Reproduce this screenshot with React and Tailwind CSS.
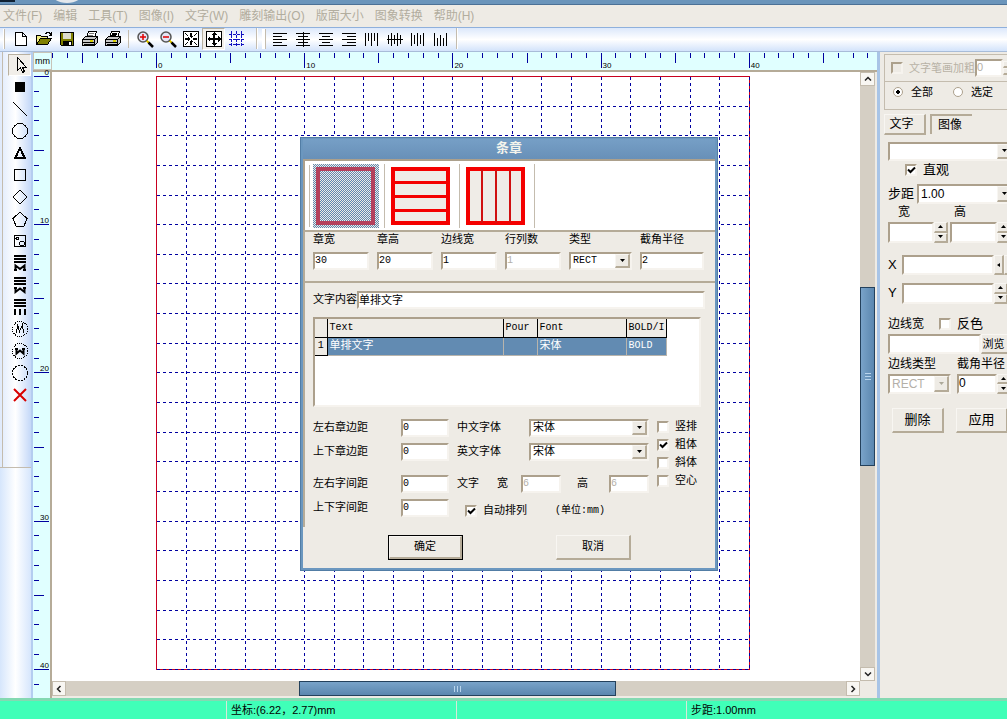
const sunken = "border-2 border-t-[#aca08c] border-l-[#aca08c] border-r-[#f6f3ee] border-b-[#f6f3ee]"
const raised = "border-t border-l border-r-2 border-b-2 border-t-[#f8f6f2] border-l-[#f8f6f2] border-r-[#b5ab98] border-b-[#b5ab98] bg-[#eeebe5]"
const sans = "font-['Liberation_Sans','Noto_Sans_CJK_SC',sans-serif]"
const mono = "font-['Liberation_Mono','Noto_Sans_CJK_SC',monospace]"

const STEP = 14.82

const menus = ["文件(F)", "编辑", "工具(T)", "图像(I)", "文字(W)", "雕刻输出(O)", "版面大小", "图象转换", "帮助(H)"]

function Icon({ children, size = 18 }) {
  return (
    <svg width={size} height={size} viewBox={`0 0 ${size} ${size}`} fill="none" stroke="#000" shapeRendering="crispEdges">
      {children}
    </svg>
  )
}

function Printer({ dark }) {
  return (
    <Icon>
      <path d="M5.5 7.5l2-6h8l-2 6" fill="#fff" />
      <path d="M8 3.5h5M7 5.5h5" stroke={dark ? "#000" : "#777"} strokeWidth={dark ? 2 : 1} />
      <path d="M1.5 9.5l3-3h11l1 1v5l-3 3h-12z" fill="#c8c8c8" />
      <path d="M1.5 9.5h12v6M13.5 9.5l3-3M2 12.5h11M3 14.5h11" />
      <path d="M9 11h3" stroke="#d8d000" strokeWidth="2" />
    </Icon>
  )
}

function Magnifier({ plus }) {
  return (
    <Icon>
      <circle cx="7" cy="7" r="5" fill="#e4e4f4" stroke="#555" strokeWidth="1.5" shapeRendering="auto" />
      <path d="M4 7h6" stroke="#e00000" strokeWidth="1.500" shapeRendering="auto" />
      {plus && <path d="M7 4v6" stroke="#e00000" strokeWidth="1.500" shapeRendering="auto" />}
      <path d="M11 11l2 2" stroke="#d8c000" strokeWidth="2" />
      <path d="M12.5 12.5l4.500 4.500" strokeWidth="2.500" shapeRendering="auto" />
    </Icon>
  )
}

const fileTools = [
  { name: "New", icon: <Icon><path d="M3.500 2.500h7l4 4v9h-11zM10.500 2.500v4h4" fill="#fff" /></Icon> },
  {
    name: "Open",
    icon: (
      <Icon>
        <path d="M1.500 14.500v-9h4l1 1h6v3" fill="#f0ec80" />
        <path d="M1.500 14.500l4-6h11l-4 6z" fill="#808000" />
        <path d="M10 3.500h1l1-1h2l2 2M16.500 2v3h-3" />
      </Icon>
    ),
  },
  {
    name: "Save",
    icon: (
      <Icon>
        <path d="M2.500 2.500h13v13h-12l-1-1z" fill="#808000" />
        <path d="M5 3h8v6h-8z" fill="#dcdccc" stroke="none" />
        <path d="M5 11h8v4h-8z" fill="#000" />
        <path d="M11.500 11.500v3" stroke="#fff" strokeWidth="2" />
      </Icon>
    ),
  },
  { name: "Print", icon: <Printer /> },
  { name: "Print setup", icon: <Printer dark /> },
]

const viewTools = [
  { name: "Zoom in", icon: <Magnifier plus /> },
  { name: "Zoom out", icon: <Magnifier /> },
  {
    name: "Fit page",
    icon: (
      <Icon>
        <path d="M1.500 1.500h15v15h-15z" fill="#fff" />
        <path d="M9 8l-2-2h4zM9 10l-2 2h4zM8 9l-2-2v4zM10 9l2-2v4z" fill="#000" stroke="none" />
        <path d="M9 3v3M9 12v3M3 9h3M12 9h3" strokeWidth="2" />
        <path d="M3 3l3 3M15 3l-3 3M3 15l3-3M15 15l-3-3" />
      </Icon>
    ),
  },
  {
    name: "Move",
    pressed: true,
    icon: (
      <Icon>
        <path d="M1.500 1.500h15v15h-15z" fill="#fff" />
        <path d="M9 3v12M3 9h12" strokeWidth="2" />
        <path d="M9 2l-3 3h6zM9 16l-3-3h6zM2 9l3-3v6zM16 9l-3-3v6z" fill="#000" stroke="none" />
      </Icon>
    ),
  },
  { name: "Grid", icon: <Icon><path d="M3.500 1v16M8.500 1v16M13.500 1v16M1 4.500h16M1 9.500h16M1 14.500h16" stroke="#1010c0" strokeDasharray="3 1" /></Icon> },
]

const alignTools = [
  { name: "Align left", d: "M2 3.500h14M2 6.500h9M2 9.500h14M2 12.500h9M2 15.500h14" },
  { name: "Align centre line", d: "M2 3.500h14M4 6.500h10M2 9.500h14M4 12.500h10M2 15.500h14M9 2v15" },
  { name: "Align centre", d: "M2 3.500h14M5 6.500h8M2 9.500h14M5 12.500h8M2 15.500h14" },
  { name: "Align right", d: "M2 3.500h14M7 6.500h9M2 9.500h14M7 12.500h9M2 15.500h14" },
  { name: "Align top", d: "M2.500 3v13M5.500 3v8M8.500 3v13M11.500 3v8M14.500 3v13" },
  { name: "Align middle line", d: "M2.500 5v9M5.500 3v13M8.500 5v9M11.500 3v13M14.500 5v9M1 9.500h16" },
  { name: "Align middle", d: "M2.500 3v13M5.500 5v9M8.500 3v13M11.500 5v9M14.500 3v13" },
  { name: "Align bottom", d: "M2.500 3v13M5.500 8v8M8.500 5v11M11.500 8v8M14.500 3v13" },
]

const drawTools = [
  { name: "Select", pressed: true, icon: <path d="M6.500 1.500v13l3-3 2 5 2-1-2-4h4z" fill="#f4f1ec" /> },
  { name: "Filled box", icon: <path d="M4 4h10v10h-10z" fill="#000" stroke="none" /> },
  { name: "Line", icon: <path d="M2 2l14 14" /> },
  { name: "Circle", icon: <circle cx="9" cy="9" r="7.500" /> },
  { name: "Triangle", icon: <path d="M9 4l-4.500 9.500h9z" strokeWidth="2" /> },
  { name: "Rectangle", icon: <path d="M3.500 3.500h11v11h-11z" /> },
  { name: "Diamond", icon: <path d="M9 2l7 7-7 7-7-7z" /> },
  { name: "Pentagon", icon: <path d="M9 2l7 6.500-3 7.500h-8l-3-7.500z" /> },
  {
    name: "Image",
    icon: (
      <>
        <path d="M3.500 3.500h11v11h-11z" />
        <circle cx="6.500" cy="6.500" r="1.500" />
        <circle cx="11" cy="11.500" r="2.500" />
      </>
    ),
  },
  { name: "Text block M", icon: <><path d="M3 2h12M3 5h12M3 8h12" strokeWidth="2" /><path d="M3 16h3M12 16h3" strokeWidth="2" /><path d="M4.500 16v-4.500l4.500 3.500 4.500-3.500v4.500" strokeWidth="2" shapeRendering="auto" /></> },
  { name: "Text block W", icon: <><path d="M3 2h12M3 5h12M3 8h12" strokeWidth="2" /><path d="M3 12h3M12 12h3" strokeWidth="2" /><path d="M4.500 11.500v4.500l4.500-3.500 4.500 3.500v-4.500" strokeWidth="2" shapeRendering="auto" /></> },
  { name: "Text columns", icon: <><path d="M3 2h12M3 5h12M3 8h12" strokeWidth="2" /><path d="M4 11v6M9 11v6M14 11v6" strokeWidth="2" /></> },
  { name: "Round M", icon: <><circle cx="9" cy="9" r="7.500" strokeDasharray="1 1" /><path d="M5.500 13.500l1-9 2 7 3-7 1 9" /></> },
  { name: "Round W", icon: <><circle cx="9" cy="9" r="7.500" strokeDasharray="1 1" /><path d="M4 7h3M11 7h3" strokeWidth="2" /><path d="M5.500 6.500v5l3.500-3 3.500 3v-5" strokeWidth="2" shapeRendering="auto" /></> },
  { name: "Round", icon: <circle cx="9" cy="9" r="7.500" strokeDasharray="2 1" /> },
  { name: "Delete", icon: <path d="M3 3l12 12M15 3l-12 12" stroke="#d80000" strokeWidth="2" shapeRendering="auto" /> },
]

function ToolButton({ name, pressed, children }) {
  return (
    <button
      aria-label={name}
      className={`flex h-[22px] w-[23px] shrink-0 items-center justify-center ${pressed ? "border border-t-[#b8b0a0] border-l-[#b8b0a0] border-r-white border-b-white bg-[#f1eee9]" : ""}`}
    >
      {children}
    </button>
  )
}

function Arrow({ dir = "down", dim }) {
  const shapes = { down: "M0 0h5l-2.500 3z", up: "M0 3h5l-2.500-3z", left: "M4 0v4l-3-2z" }
  return (
    <svg width="5" height="4" viewBox="0 0 5 4" fill={dim ? "#aca899" : "#000"}>
      <path d={shapes[dir]} />
    </svg>
  )
}

function Combo({ value, label, disabled, className = "", id }) {
  return (
    <div className={`flex items-stretch ${sunken} bg-white ${className}`}>
      <select
        id={id}
        aria-label={label}
        disabled={disabled}
        className="min-w-0 flex-1 appearance-none bg-white pl-0.5 leading-[14px] text-black disabled:text-[#b4b0a8] disabled:opacity-100"
      >
        <option>{value}</option>
      </select>
      <span className={`flex w-[15px] items-center justify-center ${raised}`}>
        <Arrow dim={disabled} />
      </span>
    </div>
  )
}

function Field({ className = "", ...props }) {
  return <input type="text" className={`min-w-0 ${sunken} bg-white pb-0.5 disabled:text-[#b4b0a8] ${className}`} {...props} />
}

function Check({ label, checked, disabled, className = "" }) {
  return (
    <label className={`flex items-center gap-1.5 whitespace-nowrap ${disabled ? "text-[#b8b2a6]" : ""} ${className}`}>
      <span className="grid size-3 shrink-0">
        <input
          type="checkbox"
          defaultChecked={checked}
          disabled={disabled}
          className={`peer size-3 appearance-none [grid-area:1/1] ${sunken} bg-white disabled:bg-[#eeebe5]`}
        />
        <svg className="pointer-events-none hidden [grid-area:1/1] peer-checked:block" width="12" height="12" viewBox="0 0 12 12" fill="none" stroke="#000" strokeWidth="2">
          <path d="M3 5.500l2.500 2.500 4.500-4.500" />
        </svg>
      </span>
      {label}
    </label>
  )
}

function Spinner() {
  return (
    <span className="flex w-[14px] shrink-0 flex-col">
      <button aria-label="Increase" className={`flex flex-1 items-center justify-center ${raised}`}><Arrow dir="up" /></button>
      <button aria-label="Decrease" className={`flex flex-1 items-center justify-center ${raised}`}><Arrow /></button>
    </span>
  )
}

function HorizontalRuler() {
  const ticks = Array.from({ length: 56 }, (_, i) => i - 7)
  return (
    <svg className="h-full min-w-0 flex-1" stroke="#0000a0" shapeRendering="crispEdges">
      {ticks.map((t) => {
        const x = Math.round(104 + t * STEP) + 0.5
        return <line key={t} x1={x} x2={x} y1="1" y2={t % 10 === 0 ? 16 : t % 5 === 0 ? 11 : 6} />
      })}
      {[0, 10, 20, 30, 40].map((t) => (
        <text key={t} x={106 + t * STEP} y="16" fontSize="8" fill="#000" stroke="none">{t}</text>
      ))}
    </svg>
  )
}

function VerticalRuler() {
  const ticks = Array.from({ length: 42 }, (_, i) => i)
  return (
    <svg className="w-[17px] shrink-0 overflow-visible bg-[#e0ffff]" stroke="#0000a0" shapeRendering="crispEdges">
      {ticks.map((t) => {
        const y = Math.round(4 + t * STEP) + 0.5
        return <line key={t} y1={y} y2={y} x1="1" x2={t % 10 === 0 ? 16 : t % 5 === 0 ? 11 : 6} />
      })}
      {[0, 10, 20, 30, 40].map((t) => (
        <text key={t} x="16" y={3 + t * STEP} fontSize="8" textAnchor="end" fill="#000" stroke="none">{t}</text>
      ))}
    </svg>
  )
}

function Drawing() {
  const size = STEP * 40
  const lines = Array.from({ length: 20 }, (_, i) => Math.round((i + 1) * STEP * 2))
  return (
    <svg className="min-h-0 min-w-0 flex-1 bg-white" fill="none" shapeRendering="crispEdges">
      <rect x="104.500" y="4.500" width={Math.round(size)} height={Math.round(size)} stroke="#c80020" />
      <g stroke="#0000a0" strokeDasharray="3 3">
        {lines.map((p) => (
          <g key={p}>
            <line x1={p + 104.5} x2={p + 104.5} y1="5" y2={size + 4} />
            <line x1="105" x2={size + 104} y1={p + 4.5} y2={p + 4.5} />
          </g>
        ))}
      </g>
    </svg>
  )
}

function Chevron({ d }) {
  return (
    <svg width="8" height="8" viewBox="0 0 8 8" fill="none" stroke="#222" strokeWidth="1.500">
      <path d={d} />
    </svg>
  )
}

function VScroll() {
  return (
    <div className="flex w-[15px] shrink-0 flex-col bg-[#d5cfc4]">
      <button aria-label="Scroll up" className="flex h-3.5 items-center justify-center border border-[#c4bcae] bg-[#f8f6f2]"><Chevron d="M1 5.500l3-3 3 3" /></button>
      <div className="grow-[202] basis-0" />
      <div className="flex grow-[177] basis-0 flex-col items-center justify-center gap-0.5 border border-[#24415c] bg-gradient-to-r from-[#79a3c9] to-[#5b87af]">
        <i className="h-px w-1.5 bg-[#b8d4ec]" />
        <i className="h-px w-1.5 bg-[#b8d4ec]" />
        <i className="h-px w-1.5 bg-[#b8d4ec]" />
      </div>
      <div className="grow-[202] basis-0" />
      <button aria-label="Scroll down" className="flex h-3.5 items-center justify-center border border-[#c4bcae] bg-[#f8f6f2]"><Chevron d="M1 2.500l3 3 3-3" /></button>
    </div>
  )
}

function HScroll() {
  return (
    <div className="mr-[15px] flex h-[15px] bg-[#d5cfc4]">
      <button aria-label="Scroll left" className="flex w-3.5 items-center justify-center border border-[#c4bcae] bg-[#f8f6f2]"><Chevron d="M5.500 1l-3 3 3 3" /></button>
      <div className="grow-[234] basis-0" />
      <div className="flex grow-[315] basis-0 items-center justify-center gap-0.5 border border-[#24415c] bg-gradient-to-b from-[#79a3c9] to-[#5b87af]">
        <i className="h-1.5 w-px bg-[#b8d4ec]" />
        <i className="h-1.5 w-px bg-[#b8d4ec]" />
        <i className="h-1.5 w-px bg-[#b8d4ec]" />
      </div>
      <div className="grow-[231] basis-0" />
      <button aria-label="Scroll right" className="flex w-3.5 items-center justify-center border border-[#c4bcae] bg-[#f8f6f2]"><Chevron d="M2.500 1l3 3-3 3" /></button>
    </div>
  )
}

function Stamp({ type }) {
  const bars = [18, 32, 46]
  return (
    <svg width="66" height="64" viewBox="0 0 66 64" fill="none" stroke="#f40000" shapeRendering="crispEdges">
      {type === "single" && (
        <>
          <defs>
            <pattern id="dither" width="2" height="2" patternUnits="userSpaceOnUse">
              <path d="M0 0h1v1h-1zM1 1h1v1h-1z" fill="#5f87b0" stroke="none" />
            </pattern>
          </defs>
          <rect width="66" height="64" fill="#efece7" stroke="none" />
          <rect width="66" height="64" fill="url(#dither)" stroke="none" />
        </>
      )}
      <rect x="5" y="5" width="55" height="54" fill={type === "single" ? "none" : "#efece7"} stroke={type === "single" ? "#b4405c" : "#f40000"} strokeWidth="4" />
      {type === "rows" && bars.map((b) => <path key={b} d={`M5 ${b + 0.5}h55`} strokeWidth="3" />)}
      {type === "columns" && bars.map((b) => <path key={b} d={`M${b + 1} 5v54`} strokeWidth="2" stroke="#d01010" />)}
    </svg>
  )
}

const sizeFields = [
  { id: "w", label: "章宽", value: "30" },
  { id: "h", label: "章高", value: "20" },
  { id: "edge", label: "边线宽", value: "1" },
  { id: "rows", label: "行列数", value: "1", disabled: true },
]

const margins = ["左右章边距", "上下章边距", "左右字间距", "上下字间距"]

function StampDialog() {
  return (
    <div role="dialog" aria-label="条章" className={`absolute top-[85px] left-[267px] w-[418px] border-[3px] border-t-2 border-[#6b97bf] bg-[#eeebe5] text-[11px] leading-3 outline outline-1 -outline-offset-1 outline-[#527da5] ${mono}`}>
      <h1 className="h-5 bg-gradient-to-b from-[#769fc6] to-[#6890b8] text-center text-[13px] leading-5 font-bold text-[#f4f4ec]">条章</h1>

      <div className="flex h-[71px] items-center border-t-2 border-l-2 border-[#aca08c] bg-white">
        <span className="ml-1 h-[62px] w-px bg-[#c4bcae]" />
        {["single", "rows", "columns"].map((type) => (
          <button key={type} aria-label={type} className="flex h-[64px] w-[75px] items-center border-r border-[#c4bcae] pl-[3px]">
            <Stamp type={type} />
          </button>
        ))}
      </div>

      <div className="grid h-[51px] grid-cols-[repeat(4,56px)_63px_64px] gap-x-2 border-t-2 border-l-2 border-[#b5ab98] pt-0.5 pl-2">
        {sizeFields.map((f) => (
          <div key={f.id} className="flex flex-col gap-1.5">
            <label htmlFor={f.id}>{f.label}</label>
            <Field id={f.id} defaultValue={f.value} disabled={f.disabled} className="h-[18px] text-[10px]" />
          </div>
        ))}
        <div className="flex flex-col gap-1.5">
          <label htmlFor="type">类型</label>
          <Combo id="type" value="RECT" className="h-[18px] text-[10px]" />
        </div>
        <div className="flex flex-col gap-1.5">
          <label htmlFor="radius">截角半径</label>
          <Field id="radius" defaultValue="2" className="h-[18px] text-[10px]" />
        </div>
      </div>

      <div className="h-[246px] border-t-2 border-l-2 border-[#b5ab98] pt-2 pr-2.5 pl-2">
        <div className="flex items-center">
          <label htmlFor="content" className="w-11">文字内容</label>
          <Field id="content" defaultValue="单排文字" className="h-[18px] flex-1" />
        </div>

        <div className={`mt-2 mr-1 h-[90px] ${sunken} bg-white`}>
          <table className="table-fixed border-collapse text-left">
            <colgroup>
              <col className="w-3" />
              <col className="w-44" />
              <col className="w-[34px]" />
              <col className="w-[89px]" />
              <col className="w-10" />
            </colgroup>
            <thead>
              <tr className="h-[18px] bg-[#eeebe5] text-[10px]">
                <th className="border-r border-b border-black p-0" />
                <th className="border-r border-b border-black p-0 pl-0.5 font-normal">Text</th>
                <th className="border-r border-b border-black p-0 pl-0.5 font-normal">Pour</th>
                <th className="border-r border-b border-black p-0 pl-0.5 font-normal">Font</th>
                <th className="border-r border-b border-black p-0 pl-0.5 font-normal">BOLD/I</th>
              </tr>
            </thead>
            <tbody>
              <tr className="h-[18px] bg-[#628bb2] text-white">
                <th className="border-r border-b border-black bg-[#eeebe5] p-0 text-center text-[10px] font-normal text-black">1</th>
                <td className="border-r border-b border-[#b8b4ac] p-0 pl-0.5">单排文字</td>
                <td className="border-r border-b border-[#b8b4ac] p-0" />
                <td className="border-r border-b border-[#b8b4ac] p-0 pl-0.5">宋体</td>
                <td className="border-r border-b border-[#b8b4ac] p-0 pl-0.5 text-[10px]">BOLD</td>
              </tr>
            </tbody>
          </table>
        </div>

        <div className="mt-3 flex">
          <div className="grid grid-cols-[88px_48px] grid-rows-[24px_32px_24px_18px]">
            {margins.map((m, i) => (
              <div key={m} className="contents">
                <label htmlFor={`margin${i}`} className="pt-[3px]">{m}</label>
                <Field id={`margin${i}`} defaultValue="0" className="h-[18px] text-[10px]" />
              </div>
            ))}
          </div>
          <div className="ml-2 grid w-48 grid-rows-[24px_32px_24px_18px]">
            <div className="flex items-start">
              <label htmlFor="cnfont" className="w-[72px] pt-[3px]">中文字体</label>
              <Combo id="cnfont" value="宋体" className="h-[18px] flex-1" />
            </div>
            <div className="flex items-start">
              <label htmlFor="enfont" className="w-[72px] pt-[3px]">英文字体</label>
              <Combo id="enfont" value="宋体" className="h-[18px] flex-1" />
            </div>
            <div className="flex items-start">
              <span className="w-10 pt-[3px]">文字</span>
              <label htmlFor="cw" className="w-6 pt-[3px]">宽</label>
              <Field id="cw" disabled defaultValue="6" className="h-[18px] w-10 text-[10px]" />
              <label htmlFor="ch" className="ml-4 w-8 pt-[3px]">高</label>
              <Field id="ch" disabled defaultValue="6" className="h-[18px] w-10 text-[10px]" />
            </div>
            <div className="flex items-end gap-7 pl-2">
              <Check label="自动排列" checked />
              <span className="text-[10px]">(单位:mm)</span>
            </div>
          </div>
          <div className="ml-2 flex flex-col gap-1.5 pt-0.5">
            <Check label="竖排" />
            <Check label="粗体" checked />
            <Check label="斜体" />
            <Check label="空心" />
          </div>
        </div>
      </div>

      <div className="flex gap-[93px] pt-2 pb-2 pl-[85px]">
        <button className="border border-black">
          <span className={`flex h-[23px] w-[73px] items-center justify-center ${raised}`}>确定</span>
        </button>
        <button className={`h-[25px] w-[75px] ${raised}`}>取消</button>
      </div>
    </div>
  )
}

function SidePanel() {
  return (
    <aside className={`w-[130px] shrink-0 overflow-hidden border-l-[3px] border-[#a8c4e6] bg-[#eeebe5] text-[13px] leading-4 ${sans}`}>
      <div className="w-[140px] pl-1">
        <div className="mt-0.5 border-t border-l border-[#c4bcae] text-[11px]">
          <div className="flex h-[27px] items-center border-b border-[#c4bcae] pl-1.5">
            <Check label="文字笔画加粗" disabled />
            <Field aria-label="文字笔画加粗" disabled defaultValue="0" className="h-[18px] w-7" />
            <Spinner />
          </div>
          <fieldset className="flex h-7 items-start border-b border-[#c4bcae] pt-0.5 pl-2">
            <label className="flex w-[60px] items-center gap-2">
              <input type="radio" name="scope" defaultChecked className="size-2.5 appearance-none rounded-full border border-[#aca08c] bg-white bg-[radial-gradient(#000_0_2px,#fff_2px)]" />
              全部
            </label>
            <label className="flex items-center gap-2">
              <input type="radio" name="scope" className="size-2.5 appearance-none rounded-full border border-[#aca08c] bg-white" />
              选定
            </label>
          </fieldset>
        </div>

        <div className="mt-1 flex gap-1 text-xs">
          <button className={`h-[21px] w-[42px] pr-1.5 ${raised}`}>文字</button>
          <button className="h-5 w-[42px] border-t-2 border-l-2 border-[#b5ab98] pr-1">图像</button>
        </div>

        <div className="pl-1">
          <Combo label="图像" value="" className="mt-[7px] h-[19px] w-[126px]" />
          <Check label="直观" checked className="mt-px ml-[17px]" />
          <div className="mt-1.5 flex items-center">
            <label htmlFor="step" className="w-[29px] whitespace-nowrap">步距</label>
            <Combo id="step" value="1.00" className="h-5 w-[97px] text-xs" />
          </div>
          <div className="flex text-xs">
            <label htmlFor="pw" className="w-14 pl-2.5">宽</label>
            <label htmlFor="ph" className="pl-2.5">高</label>
          </div>
          <div className="mt-0.5 flex h-[21px]">
            <Field id="pw" className="w-[46px]" />
            <Spinner />
            <Field id="ph" className="ml-0.5 w-[47px]" />
            <Spinner />
          </div>
          <div className="mt-3 flex h-5 items-center">
            <label htmlFor="px" className="w-3.5">X</label>
            <Field id="px" className="h-5 w-[92px]" />
            <button aria-label="Left" className={`flex h-5 w-2.5 items-center justify-center ${raised}`}><Arrow dir="left" /></button>
            <button aria-label="Right" className={`h-5 w-2.5 ${raised}`} />
          </div>
          <div className="mt-2 flex h-[21px]">
            <label htmlFor="py" className="w-3.5 pt-0.5">Y</label>
            <Field id="py" className="w-[92px]" />
            <Spinner />
          </div>
          <div className="mt-3 flex items-center">
            <label htmlFor="line" className="w-[51px] text-xs">边线宽</label>
            <Check label="反色" />
          </div>
          <div className="mt-0.5 flex h-5">
            <Field id="line" className="w-[94px]" />
            <button className={`w-10 pl-px text-left text-[11px] ${raised}`}>浏览</button>
          </div>
          <div className="mt-0.5 flex text-xs leading-4 whitespace-nowrap">
            <label htmlFor="linetype" className="w-[69px]">边线类型</label>
            <label htmlFor="cut">截角半径</label>
          </div>
          <div className="mt-0.5 flex h-5 text-xs">
            <Combo id="linetype" value="RECT" disabled className="w-[63px]" />
            <Field id="cut" defaultValue="0" className="ml-1.5 w-10" />
            <Spinner />
          </div>
          <div className="mt-3.5 flex gap-3 pl-1">
            <button className={`h-[25px] w-[52px] ${raised}`}>删除</button>
            <button className={`h-[25px] w-[52px] ${raised}`}>应用</button>
          </div>
        </div>
      </div>
    </aside>
  )
}

export default function App() {
  return (
    <div className={`flex h-screen flex-col overflow-hidden bg-[#eeebe5] text-xs text-black ${sans}`}>
      <header className="h-[5px] shrink-0 overflow-hidden border-b border-[#4c7196] bg-[#6b95bb]">
        <svg className="block" width="110" height="5" viewBox="0 0 110 5">
          <path d="M0 0h15v2h-15z" fill="#123" />
          <ellipse cx="67" cy="-7" rx="16" ry="10" fill="#e4e8ec" />
        </svg>
      </header>

      <nav className="flex h-[22px] shrink-0 items-center gap-[11px] pl-[3px] whitespace-nowrap text-[#b2ad9e]">
        {menus.map((m) => (
          <a key={m} href="#">{m}</a>
        ))}
      </nav>

      <div className="flex h-[25px] shrink-0 items-center border-t border-b border-t-[#8fb0dc] border-b-[#a8bcd8] bg-gradient-to-b from-[#dce8fb] via-white to-[#d3e3fb] pb-0.5">
        <span className="mr-1 ml-[3px] h-5 w-0.5 border-r border-[#c4bcae] bg-white" />
        {fileTools.map((t) => (
          <ToolButton key={t.name} name={t.name}>{t.icon}</ToolButton>
        ))}
        <span className="mx-1 h-[18px] w-px bg-[#c4bcae]" />
        {viewTools.map((t) => (
          <ToolButton key={t.name} name={t.name} pressed={t.pressed}>{t.icon}</ToolButton>
        ))}
        <span className="mr-1 ml-2 h-full w-0.5 border-l border-[#c4bcae] bg-white" />
        <span className="mr-0.5 h-5 w-1 border-r border-[#c4bcae] bg-white" />
        {alignTools.map((t) => (
          <ToolButton key={t.name} name={t.name}><Icon><path d={t.d} /></Icon></ToolButton>
        ))}
        <span className="ml-1 h-full w-0.5 border-l border-[#c4bcae] bg-white" />
      </div>

      <main className="flex min-h-0 flex-1">
        <div className="flex w-[33px] shrink-0 flex-col border-r-2 border-[#b4cdf0] bg-gradient-to-r from-[#dfeafc] via-white to-[#c4d8f8]">
          <div className="ml-0.5 flex flex-col items-end border-l border-[#c4bcae] pt-0.5 pb-[61px]">
            {drawTools.map((t) => (
              <ToolButton key={t.name} name={t.name} pressed={t.pressed}><Icon>{t.icon}</Icon></ToolButton>
            ))}
          </div>
          <div className="flex-1 border-t border-[#c4bcae] bg-gradient-to-r from-[#d6e6fc] via-white to-[#d6e6fc]" />
        </div>

        <div className="relative flex min-w-0 flex-1 flex-col">
          <div className="flex h-5 shrink-0 border-b-2 border-[#b5ab98] bg-[#e0ffff]">
            <span className="w-[19px] shrink-0 border border-[#c8c4b8] text-center text-[9px] leading-[17px]">mm</span>
            <HorizontalRuler />
          </div>
          <div className="flex min-h-0 flex-1">
            <VerticalRuler />
            <div className="flex min-w-0 flex-1 flex-col border-l-2 border-[#b5ab98] pb-0.5">
              <div className="flex min-h-0 flex-1">
                <Drawing />
                <VScroll />
              </div>
              <HScroll />
            </div>
            <div className="w-0.5 shrink-0" />
          </div>
          <StampDialog />
        </div>

        <SidePanel />
      </main>

      <footer className="grid h-[21px] shrink-0 grid-cols-[226px_230px_230px_1fr] border-t-[3px] border-[#84d9b2] bg-[#40ffb8] text-[11px] leading-[19px]">
        <span />
        <span className="border-l border-[#d8e8d8] pl-1">坐标:(6.22，2.77)mm</span>
        <span className="border-l border-[#d8e8d8]" />
        <span className="border-l border-[#d8e8d8] pl-1">步距:1.00mm</span>
      </footer>
    </div>
  )
}
